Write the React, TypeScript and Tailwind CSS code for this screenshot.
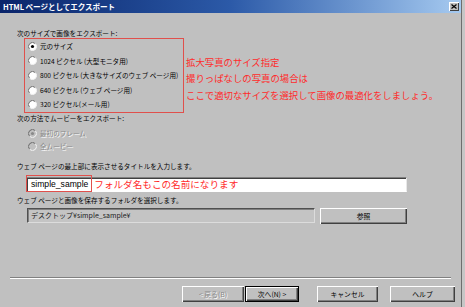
import React from "react";

function Radio({ checked = false, disabled = false }: { checked?: boolean; disabled?: boolean }) {
  return (
    <svg width="9" height="9" viewBox="0 0 9 9" className="shrink-0">
      <circle cx="4.5" cy="4.5" r="4" fill={disabled ? "#c0c0c0" : "#ffffff"} />
      <path d="M1.67 7.33 A4 4 0 0 1 7.33 1.67" stroke="#6a6a6a" fill="none" strokeWidth="1" />
      <path d="M7.33 1.67 A4 4 0 0 1 1.67 7.33" stroke="#f4f4f4" fill="none" strokeWidth="1" />
      {checked && <circle cx="4.5" cy="4.5" r="1.6" fill={disabled ? "#8a8a8a" : "#000000"} />}
    </svg>
  );
}

function Btn({
  children,
  w,
  isDefault = false,
  disabled = false,
}: {
  children: React.ReactNode;
  w: string;
  isDefault?: boolean;
  disabled?: boolean;
}) {
  return (
    <div
      className={
        "h-[16px] shrink-0 flex items-center justify-center text-[6.8px] leading-none " +
        w +
        " " +
        (isDefault
          ? "border border-black shadow-[inset_1px_1px_0_#ffffff,inset_-1px_-1px_0_#404040,inset_-2px_-2px_0_#808080]"
          : "shadow-[inset_1px_1px_0_#ffffff,inset_-1px_-1px_0_#404040,inset_-2px_-2px_0_#808080]") +
        " " +
        (disabled ? "text-[#8a8a8a] [text-shadow:1px_1px_0_#ffffff]" : "text-black")
      }
    >
      {children}
    </div>
  );
}

export default function App() {
  return (
    <div className="w-[465px] h-[307px] bg-[#c6c6c6] flex overflow-hidden font-['Noto_Sans_CJK_JP',sans-serif] leading-none">
      <div className="w-[462px] h-[307px] bg-[#c0c0c0] border-r border-[#6e6e6e] flex flex-col">
        {/* Title bar */}
        <div className="h-[13px] shrink-0 flex items-center justify-between bg-gradient-to-r from-[#0a246a] via-[#2c5aa8] to-[#a6caf0] pl-[3px] pr-[2px]">
          <span className="text-white font-bold text-[7.6px] leading-none tracking-[-0.1px]">HTML ページとしてエクスポート</span>
          <div className="w-[10px] h-[9px] bg-[#c0c0c0] flex items-center justify-center shadow-[inset_1px_1px_0_#ffffff,inset_-1px_-1px_0_#404040]">
            <svg width="6" height="5" viewBox="0 0 6 5">
              <path d="M0.5 0.5 L5.5 4.5 M5.5 0.5 L0.5 4.5" stroke="#000" strokeWidth="1.2" />
            </svg>
          </div>
        </div>

        {/* Body */}
        <div className="shrink-0 flex flex-col pl-[17px] pt-[14px] text-[6.6px] text-black">
          <div className="h-[12px] leading-[12px]">次のサイズで画像をエクスポート:</div>
          <div className="flex mt-[-1px]">
            <div className="ml-[7px] w-[160px] border border-[#e0504c] pl-[3px] flex flex-col">
              {[
                "元のサイズ",
                "1024 ピクセル (大型モニタ用)",
                "800 ピクセル (大きなサイズのウェブ ページ用)",
                "640 ピクセル (ウェブ ページ用)",
                "320 ピクセル(メール用)",
              ].map((t, i) => (
                <div key={i} className="h-[14.6px] flex items-center gap-[3px]">
                  <Radio checked={i === 0} />
                  <span className="leading-none whitespace-nowrap">{t}</span>
                </div>
              ))}
            </div>
            <div className="pl-[2px] pt-[15.5px] text-[#ff2b2b] text-[9.4px] leading-[16.5px] whitespace-nowrap">
              <div>拡大写真のサイズ指定</div>
              <div>撮りっぱなしの写真の場合は</div>
              <div>ここで適切なサイズを選択して画像の最適化をしましょう。</div>
            </div>
          </div>

          <div className="h-[12px] leading-[12px] mt-[-1px]">次の方法でムービーをエクスポート:</div>
          <div className="mt-[3px] pl-[11px] flex flex-col text-[#8a8a8a] [text-shadow:1px_1px_0_#ffffff]">
            <div className="h-[13px] flex items-center gap-[3px]">
              <Radio checked disabled />
              <span className="leading-none">最初のフレーム</span>
            </div>
            <div className="h-[13px] flex items-center gap-[3px]">
              <Radio disabled />
              <span className="leading-none">全ムービー</span>
            </div>
          </div>

          <div className="h-[12px] leading-[12px] mt-[7px]">ウェブ ページの最上部に表示させるタイトルを入力します。</div>

          <div className="relative mt-[3px] h-[17px] ml-[9px] w-[381px]">
            <div className="mt-[2px] h-[15px] w-[381px] bg-white border border-t-[#808080] border-l-[#808080] border-b-white border-r-[#e8e8e8] shadow-[inset_1px_1px_0_#404040] flex items-center pl-[4px]">
              <span className="font-['Liberation_Sans',sans-serif] text-[8.6px] leading-none text-black">simple_sample</span>
              <span className="ml-[6px] text-[#ff2b2b] text-[9.6px] leading-none whitespace-nowrap">フォルダ名もこの名前になります</span>
            </div>
            <div className="absolute left-0 top-0 w-[66px] h-[17px] border border-[#e0504c]" />
          </div>

          <div className="h-[12px] leading-[12px] mt-[2px]">ウェブ ページと画像を保存するフォルダを選択します。</div>

          <div className="flex mt-[2px] ml-[10px] gap-[5px] items-center h-[16px]">
            <div className="h-[15px] w-[288px] bg-[#c4c4c4] border border-t-[#505050] border-l-[#505050] border-b-[#dcdcdc] border-r-[#dcdcdc] shadow-[inset_1px_1px_0_#808080] flex items-center pl-[3px]">
              <span className="text-[7px] leading-none text-[#202020]">デスクトップ¥simple_sample¥</span>
            </div>
            <Btn w="w-[87px]">参照</Btn>
          </div>
        </div>

        {/* Separator */}
        <div className="shrink-0 mt-[53px] mx-[10px] h-[2px] border-t border-t-[#808080] border-b border-b-white" />

        {/* Buttons */}
        <div className="shrink-0 flex h-[16px] mt-[7px] pl-[182px] items-center">
          <Btn w="w-[62px]" disabled>
            &lt; 戻る(B)
          </Btn>
          <div className="ml-[1px]">
            <Btn w="w-[54px]" isDefault>
              次へ(N) &gt;
            </Btn>
          </div>
          <div className="ml-[18px]">
            <Btn w="w-[61px]">キャンセル</Btn>
          </div>
          <div className="ml-[12px]">
            <Btn w="w-[65px]">ヘルプ</Btn>
          </div>
        </div>
      </div>
    </div>
  );
}
